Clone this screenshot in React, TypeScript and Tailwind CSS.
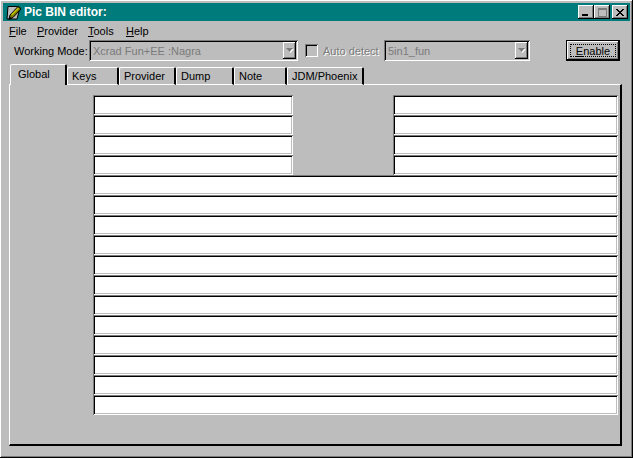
import React from 'react';

const raised = 'shadow-[inset_-1px_-1px_0_#000,inset_1px_1px_0_#fff,inset_-2px_-2px_0_#7b7b7b]';
const sunken = 'shadow-[inset_1px_1px_0_#7b7b7b,inset_-1px_-1px_0_#fff,inset_2px_2px_0_#000,inset_-2px_-2px_0_#bdbdbd]';

const tabs = [
  { label: 'Keys', width: 'w-[52px]' },
  { label: 'Provider', width: 'w-[57px]' },
  { label: 'Dump', width: 'w-[58px]' },
  { label: 'Note', width: 'w-[53px]' },
  { label: 'JDM/Phoenix', width: 'w-[77px]' },
];

const Field = ({ className = '' }: { className?: string }) => (
  <div className={`h-[20px] bg-white ${sunken} ${className}`} />
);

const Combo = ({ text, className }: { text: string; className: string }) => (
  <div className={`flex h-[21px] items-center justify-between bg-[#bdbdbd] pl-[4px] pr-[2px] ${sunken} ${className}`}>
    <span className="text-[#7b7b7b]">{text}</span>
    <div className={`flex h-[17px] w-[13px] items-center justify-center bg-[#bdbdbd] ${raised}`}>
      <svg width="8" height="5" viewBox="0 0 8 5">
        <path d="M1 1h7L4.500 5z" fill="#fff" />
        <path d="M0 0h7L3.500 4z" fill="#7b7b7b" />
      </svg>
    </div>
  </div>
);

const WinButton = ({ children }: { children: React.ReactNode }) => (
  <div className={`flex h-[14px] w-[16px] items-center justify-center bg-[#bdbdbd] ${raised}`}>{children}</div>
);

export default function App() {
  return (
    <div
      className={`flex h-[458px] w-[633px] flex-col bg-[#bdbdbd] p-[3px] text-[11px] leading-[14px] text-black ${raised}`}
      style={{ fontFamily: '"Liberation Sans", Arial, sans-serif' }}
    >
      {/* title bar */}
      <div className="flex h-[18px] items-center justify-between bg-[#007b7b] pl-[2px] pr-[2px]">
        <div className="flex items-center gap-[1px]">
          <svg width="18" height="17" viewBox="0 0 18 17">
            <path d="M3 2.500h9l3 1-3 11.500H2z" fill="#bdbdbd" stroke="#000" />
            <path d="M4 15l1-4L13 2.500l3 2.500-8 8.500z" fill="#7b7b00" stroke="#000" />
            <path d="M6 10.500L13 3.500l1 1-7 7z" fill="#c6c600" />
            <path d="M3.500 16l1-3.500 2.500 2z" fill="#000" />
          </svg>
          <span className="text-[12px] font-bold text-white">Pic BIN editor:</span>
        </div>
        <div className="flex items-center">
          <WinButton>
            <div className="mt-[6px] mr-[2px] h-[2px] w-[6px] bg-black" />
          </WinButton>
          <WinButton>
            <div className="h-[9px] w-[9px] border border-[#7b7b7b] border-t-2" />
          </WinButton>
          <div className="ml-[2px]">
            <WinButton>
              <svg width="8" height="7" viewBox="0 0 8 7">
                <path d="M0 0l7 7M1 0l7 7M7 0L0 7M8 0L1 7" stroke="#000" strokeWidth="1" />
              </svg>
            </WinButton>
          </div>
        </div>
      </div>

      {/* menu */}
      <div className="flex h-[18px] items-center pl-[6px] pt-[2px]">
        <span className="w-[28px]"><u>F</u>ile</span>
        <span className="w-[51px]"><u>P</u>rovider</span>
        <span className="w-[38px]"><u>T</u>ools</span>
        <span><u>H</u>elp</span>
      </div>

      {/* working mode row */}
      <div className="flex h-[23px] items-center pl-[11px]">
        <span className="w-[75px] whitespace-nowrap">Working Mode:</span>
        <Combo text="Xcrad Fun+EE :Nagra" className="w-[209px]" />
        <div className={`ml-[7px] h-[13px] w-[13px] bg-[#bdbdbd] ${sunken}`} />
        <span className="ml-[5px] w-[61px] whitespace-nowrap text-[#7b7b7b] [text-shadow:1px_1px_0_#fff]">Auto detect</span>
        <Combo text="5in1_fun" className="w-[146px]" />
        <div className="ml-[36px] flex h-[21px] w-[54px] items-center justify-center border border-black bg-[#bdbdbd] shadow-[inset_-1px_-1px_0_#000,inset_1px_1px_0_#fff,inset_-2px_-2px_0_#7b7b7b]">
          <div className="flex h-[13px] w-[46px] items-center justify-center border border-dotted border-black">
            <span><u>E</u>nable</span>
          </div>
        </div>
      </div>

      {/* tabs */}
      <div className="relative z-10 ml-[7px] mt-[2px] flex h-[21px] items-end">
        <div className="flex h-[21px] w-[57px] items-start rounded-t-[2px] border-l border-r-2 border-t border-l-white border-r-black border-t-white bg-[#bdbdbd] pl-[7px] pt-[2px]">
          Global
        </div>
        {tabs.map((tab) => (
          <div
            key={tab.label}
            className={`flex h-[18px] ${tab.width} items-center rounded-t-[2px] border-b border-l border-r-2 border-t border-b-white border-l-white border-r-black border-t-white pl-[4px]`}
          >
            {tab.label}
          </div>
        ))}
      </div>

      {/* page */}
      <div className="ml-[6px] mr-[8px] -mt-[1px] flex h-[362px] flex-col border-b-2 border-l border-r-2 border-t border-b-black border-l-white border-r-black border-t-white pl-[83px] pr-[2px] pt-[10px]">
        {[0, 1, 2, 3].map((i) => (
          <div key={i} className="flex justify-between">
            <Field className="w-[200px]" />
            <Field className="w-[225px]" />
          </div>
        ))}
        {Array.from({ length: 12 }).map((_, i) => (
          <Field key={i} />
        ))}
      </div>
    </div>
  );
}
